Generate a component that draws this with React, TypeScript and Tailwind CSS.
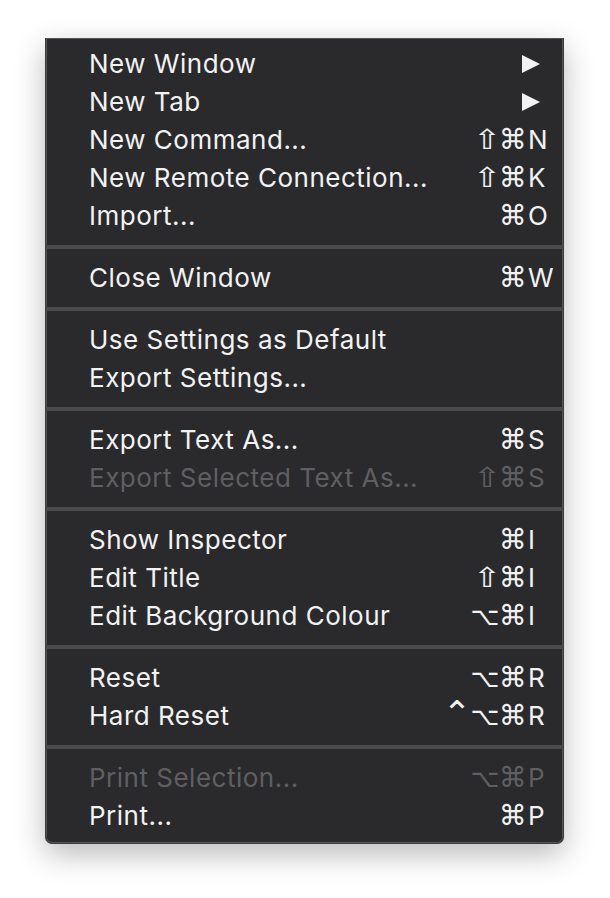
import React from 'react'

type Item = {
  label: string
  mods?: string[]
  keyChar?: string
  submenu?: boolean
  disabled?: boolean
}

const groups: Item[][] = [
  [
    { label: 'New Window', submenu: true },
    { label: 'New Tab', submenu: true },
    { label: 'New Command...', mods: ['⇧', '⌘'], keyChar: 'N' },
    { label: 'New Remote Connection...', mods: ['⇧', '⌘'], keyChar: 'K' },
    { label: 'Import...', mods: ['⌘'], keyChar: 'O' },
  ],
  [{ label: 'Close Window', mods: ['⌘'], keyChar: 'W' }],
  [{ label: 'Use Settings as Default' }, { label: 'Export Settings...' }],
  [
    { label: 'Export Text As...', mods: ['⌘'], keyChar: 'S' },
    { label: 'Export Selected Text As...', mods: ['⇧', '⌘'], keyChar: 'S', disabled: true },
  ],
  [
    { label: 'Show Inspector', mods: ['⌘'], keyChar: 'I' },
    { label: 'Edit Title', mods: ['⇧', '⌘'], keyChar: 'I' },
    { label: 'Edit Background Colour', mods: ['⌥', '⌘'], keyChar: 'I' },
  ],
  [
    { label: 'Reset', mods: ['⌥', '⌘'], keyChar: 'R' },
    { label: 'Hard Reset', mods: ['⌃', '⌥', '⌘'], keyChar: 'R' },
  ],
  [
    { label: 'Print Selection...', mods: ['⌥', '⌘'], keyChar: 'P', disabled: true },
    { label: 'Print...', mods: ['⌘'], keyChar: 'P' },
  ],
]

// per-glyph sizing so the DejaVu symbols match the mac menu glyphs
const modClass: Record<string, string> = {
  '⌘': 'text-[28px]',
  '⇧': 'text-[22px] scale-x-[1.5] scale-y-[1.25] inline-block w-[16px] text-center',
  '⌥': 'text-[25px]',
  '⌃': 'text-[34px] -translate-y-[3px] inline-block',
}

function MenuRow({ item }: { item: Item }) {
  const color = item.disabled ? 'text-[#5f5f61]' : 'text-[#f2f2f2]'
  return (
    <div className={`flex items-center h-[38px] pl-[43px] pr-[6px] ${color}`}>
      <span className="flex-1 text-[26px] tracking-[0.5px] leading-none whitespace-nowrap">{item.label}</span>
      {item.submenu ? (
        <svg width="18" height="18" viewBox="0 0 18 18" className="mr-[17px]">
          <path d="M0 0 L18 9 L0 18 Z" fill="currentColor" />
        </svg>
      ) : item.keyChar ? (
        <div className="flex items-center">
          <div className="flex justify-end items-center">
            {item.mods?.map((m, i) => (
              <span
                key={i}
                className="w-[28px] h-[30px] flex items-center justify-center leading-none font-['DejaVu_Sans',sans-serif]"
              >
                <span className={modClass[m]}>{m}</span>
              </span>
            ))}
          </div>
          <span className="w-[30px] pl-[1px] text-[26px] leading-none">{item.keyChar}</span>
        </div>
      ) : null}
    </div>
  )
}

export default function App() {
  return (
    <div className="w-[610px] h-[898px] bg-white font-['Inter','Liberation_Sans',sans-serif]">
      <div className="ml-[45px] pt-[38px]">
        <div className="w-[519px] bg-[#2a2a2d] border-x border-b border-[#3c3c3e] rounded-b-[7px] shadow-[0_10px_30px_rgba(0,0,0,0.28),inset_0_0_0_1px_#545456] pt-[7px] pb-[8px]">
          {groups.map((g, gi) => (
            <div key={gi}>
              {gi > 0 && (
                <div className="py-[10px]">
                  <div className="h-[4px] bg-[#4a4a4c]" />
                </div>
              )}
              {g.map((item, ii) => (
                <MenuRow key={ii} item={item} />
              ))}
            </div>
          ))}
        </div>
      </div>
    </div>
  )
}
